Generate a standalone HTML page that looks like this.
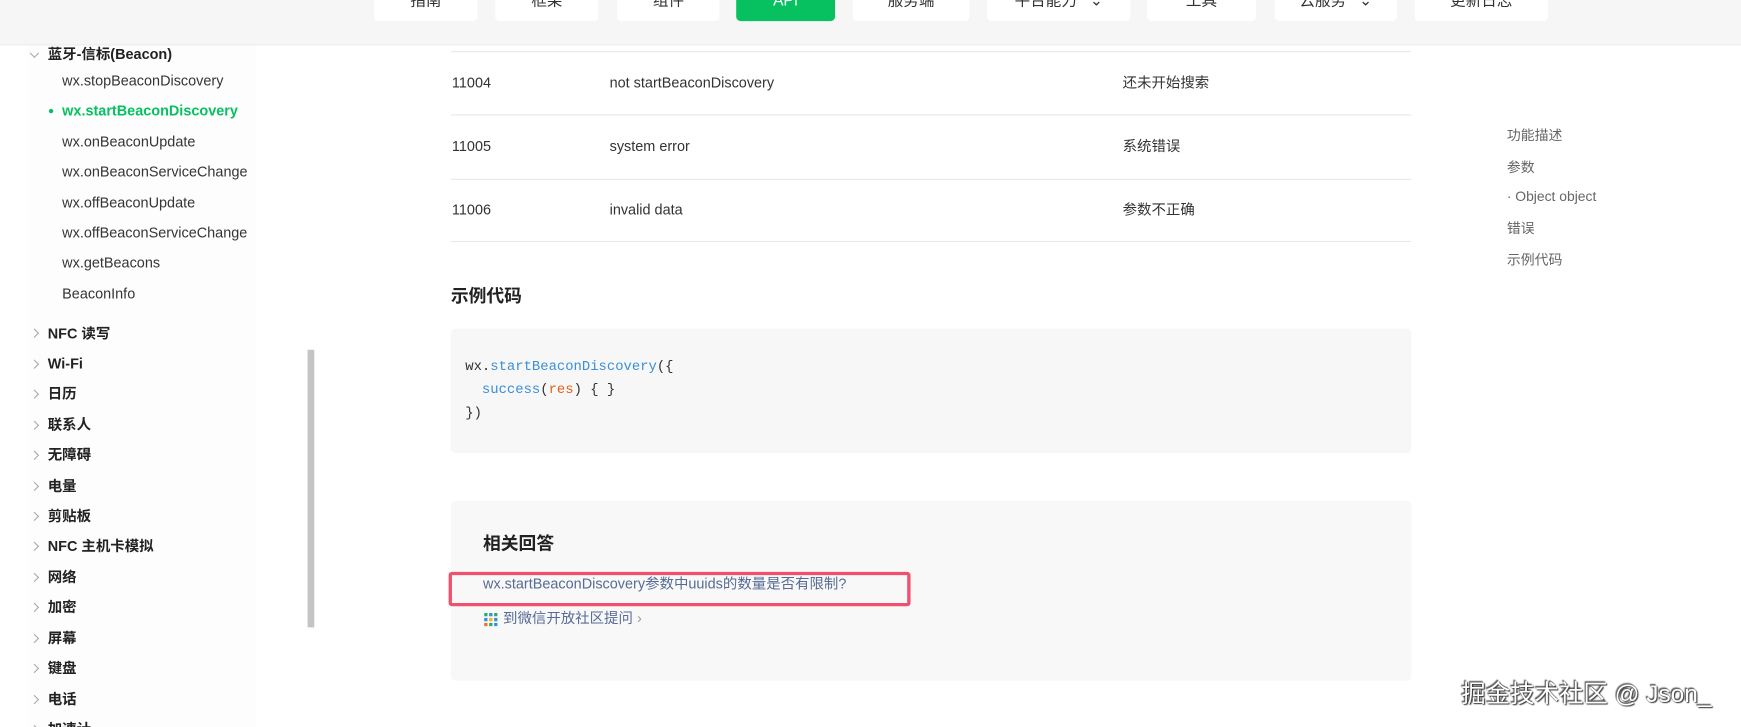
<!DOCTYPE html>
<html><head><meta charset="utf-8"><style>
html,body{margin:0;padding:0;width:1741px;height:727px;overflow:hidden;background:#fff;}
#w{position:absolute;left:0;top:0;width:1568px;height:655px;overflow:hidden;transform:scale(1.1104);transform-origin:0 0;font-family:"Liberation Sans","Noto Sans CJK SC",sans-serif;color:#333;}
.a{position:absolute;white-space:pre;line-height:16px;}
.top{position:absolute;left:0;top:0;width:1568px;height:40px;background:#f6f6f6;border-bottom:1px solid #ededed;}
.btn{position:absolute;top:-6px;height:25px;background:#fff;border-radius:4px;text-align:center;font-size:14px;line-height:16px;color:#333;overflow:hidden;}
.btn span{position:relative;top:-2px;}
.side{position:absolute;left:25px;top:41px;width:205px;height:614px;background:#fdfdfd;}
.sub{font-size:13px;color:#353535;left:56px;}
.cat{font-size:13px;font-weight:bold;color:#222;left:43px;}
.arr{position:absolute;left:28px;width:5px;height:5px;border-right:1px solid #aaa;border-bottom:1px solid #aaa;transform:rotate(-45deg);}
.line{position:absolute;left:406px;width:865px;height:1px;background:#e8e8e8;}
.td{font-size:13px;color:#333;}
.rn{font-size:12.5px;color:#666;left:1357px;}
.mono{font-family:"Liberation Mono",monospace;font-size:12.5px;color:#333;left:419px;}
</style></head><body><div id="w">
<div class="top"></div>
<div class="btn" style="left:337px;width:93px"><span>指南</span></div>
<div class="btn" style="left:446px;width:93px"><span>框架</span></div>
<div class="btn" style="left:556px;width:92px"><span>组件</span></div>
<div class="btn" style="left:663px;width:89px;background:#07c160;color:#fff"><span>API</span></div>
<div class="btn" style="left:768px;width:105px"><span>服务端</span></div>
<div class="btn" style="left:889px;width:129px"><span>平台能力 &nbsp; ⌄</span></div>
<div class="btn" style="left:1033px;width:98px"><span>工具</span></div>
<div class="btn" style="left:1148px;width:110px"><span>云服务 &nbsp; ⌄</span></div>
<div class="btn" style="left:1274px;width:120px"><span>更新日志</span></div>
<div class="side"></div>
<div class="arr" style="top:45px;transform:rotate(45deg)"></div>
<div class="a cat" style="top:41px">蓝牙-信标(Beacon)</div>
<div class="a sub" style="top:65px">wx.stopBeaconDiscovery</div>
<div class="a" style="left:44px;top:98px;width:4px;height:4px;border-radius:2px;background:#07c160"></div>
<div class="a sub" style="top:92px;color:#07c160;font-weight:bold">wx.startBeaconDiscovery</div>
<div class="a sub" style="top:120px">wx.onBeaconUpdate</div>
<div class="a sub" style="top:147px">wx.onBeaconServiceChange</div>
<div class="a sub" style="top:175px">wx.offBeaconUpdate</div>
<div class="a sub" style="top:202px">wx.offBeaconServiceChange</div>
<div class="a sub" style="top:229px">wx.getBeacons</div>
<div class="a sub" style="top:257px">BeaconInfo</div>
<div class="arr" style="top:297px"></div><div class="a cat" style="top:293px">NFC 读写</div>
<div class="arr" style="top:325px"></div><div class="a cat" style="top:320px">Wi-Fi</div>
<div class="arr" style="top:352px"></div><div class="a cat" style="top:347px">日历</div>
<div class="arr" style="top:380px"></div><div class="a cat" style="top:375px">联系人</div>
<div class="arr" style="top:407px"></div><div class="a cat" style="top:402px">无障碍</div>
<div class="arr" style="top:435px"></div><div class="a cat" style="top:430px">电量</div>
<div class="arr" style="top:462px"></div><div class="a cat" style="top:457px">剪贴板</div>
<div class="arr" style="top:489px"></div><div class="a cat" style="top:484px">NFC 主机卡模拟</div>
<div class="arr" style="top:517px"></div><div class="a cat" style="top:512px">网络</div>
<div class="arr" style="top:544px"></div><div class="a cat" style="top:539px">加密</div>
<div class="arr" style="top:572px"></div><div class="a cat" style="top:567px">屏幕</div>
<div class="arr" style="top:599px"></div><div class="a cat" style="top:594px">键盘</div>
<div class="arr" style="top:627px"></div><div class="a cat" style="top:622px">电话</div>
<div class="arr" style="top:654px"></div><div class="a cat" style="top:649px">加速计</div>
<div class="a" style="left:277px;top:315px;width:6px;height:250px;background:#c4c4c4"></div>
<div class="line" style="top:46px"></div>
<div class="line" style="top:103px"></div>
<div class="line" style="top:161px"></div>
<div class="line" style="top:217px"></div>
<div class="a td" style="left:407px;top:67px">11004</div><div class="a td" style="left:549px;top:67px">not startBeaconDiscovery</div><div class="a td" style="left:1011px;top:67px">还未开始搜索</div>
<div class="a td" style="left:407px;top:124px">11005</div><div class="a td" style="left:549px;top:124px">system error</div><div class="a td" style="left:1011px;top:124px">系统错误</div>
<div class="a td" style="left:407px;top:181px">11006</div><div class="a td" style="left:549px;top:181px">invalid data</div><div class="a td" style="left:1011px;top:181px">参数不正确</div>
<div class="a" style="left:406px;top:260px;font-size:16px;font-weight:bold;color:#222">示例代码</div>
<div class="a" style="left:406px;top:296px;width:865px;height:112px;background:#f7f7f7;border-radius:4px"></div>
<div class="a mono" style="top:322px">wx.<span style="color:#3a8fd6">startBeaconDiscovery</span>({</div>
<div class="a mono" style="top:343px">  <span style="color:#3a8fd6">success</span>(<span style="color:#e0601b">res</span>) { }</div>
<div class="a mono" style="top:364px">})</div>
<div class="a" style="left:406px;top:451px;width:865px;height:162px;background:#f8f8f8;border-radius:4px"></div>
<div class="a" style="left:435px;top:483px;font-size:16px;font-weight:bold;color:#222">相关回答</div>
<div class="a" style="left:404px;top:515px;width:410px;height:25px;border:3px solid #f0506e;border-radius:3px"></div>
<div class="a" style="left:435px;top:518px;font-size:13px;color:#576b95">wx.startBeaconDiscovery参数中uuids的数量是否有限制?</div>
<svg class="a" style="left:436px;top:552px" width="12" height="12"><g>
<rect x="0" y="0" width="3" height="3" fill="#2aae67"/><rect x="4.5" y="0" width="3" height="3" fill="#3a8fd6"/><rect x="9" y="0" width="3" height="3" fill="#2aae67"/>
<rect x="0" y="4.5" width="3" height="3" fill="#3a8fd6"/><rect x="4.5" y="4.5" width="3" height="3" fill="#f0b429"/><rect x="9" y="4.5" width="3" height="3" fill="#3a8fd6"/>
<rect x="0" y="9" width="3" height="3" fill="#f07030"/><rect x="4.5" y="9" width="3" height="3" fill="#2aae67"/><rect x="9" y="9" width="3" height="3" fill="#3a8fd6"/></g></svg>
<div class="a" style="left:453px;top:549px;font-size:13px;color:#576b95">到微信开放社区提问 <span style="color:#999">›</span></div>
<div class="a rn" style="top:114px">功能描述</div>
<div class="a rn" style="top:143px">参数</div>
<div class="a rn" style="top:169px">· Object object</div>
<div class="a rn" style="top:198px">错误</div>
<div class="a rn" style="top:226px">示例代码</div>
<div class="a" style="left:1316px;top:612px;font-size:22px;line-height:26px;color:#fff;text-shadow:0 0 1px #333,1px 1px 1px #333,-1px -1px 1px #555">掘金技术社区 @ Json_</div>
</div></body></html>
